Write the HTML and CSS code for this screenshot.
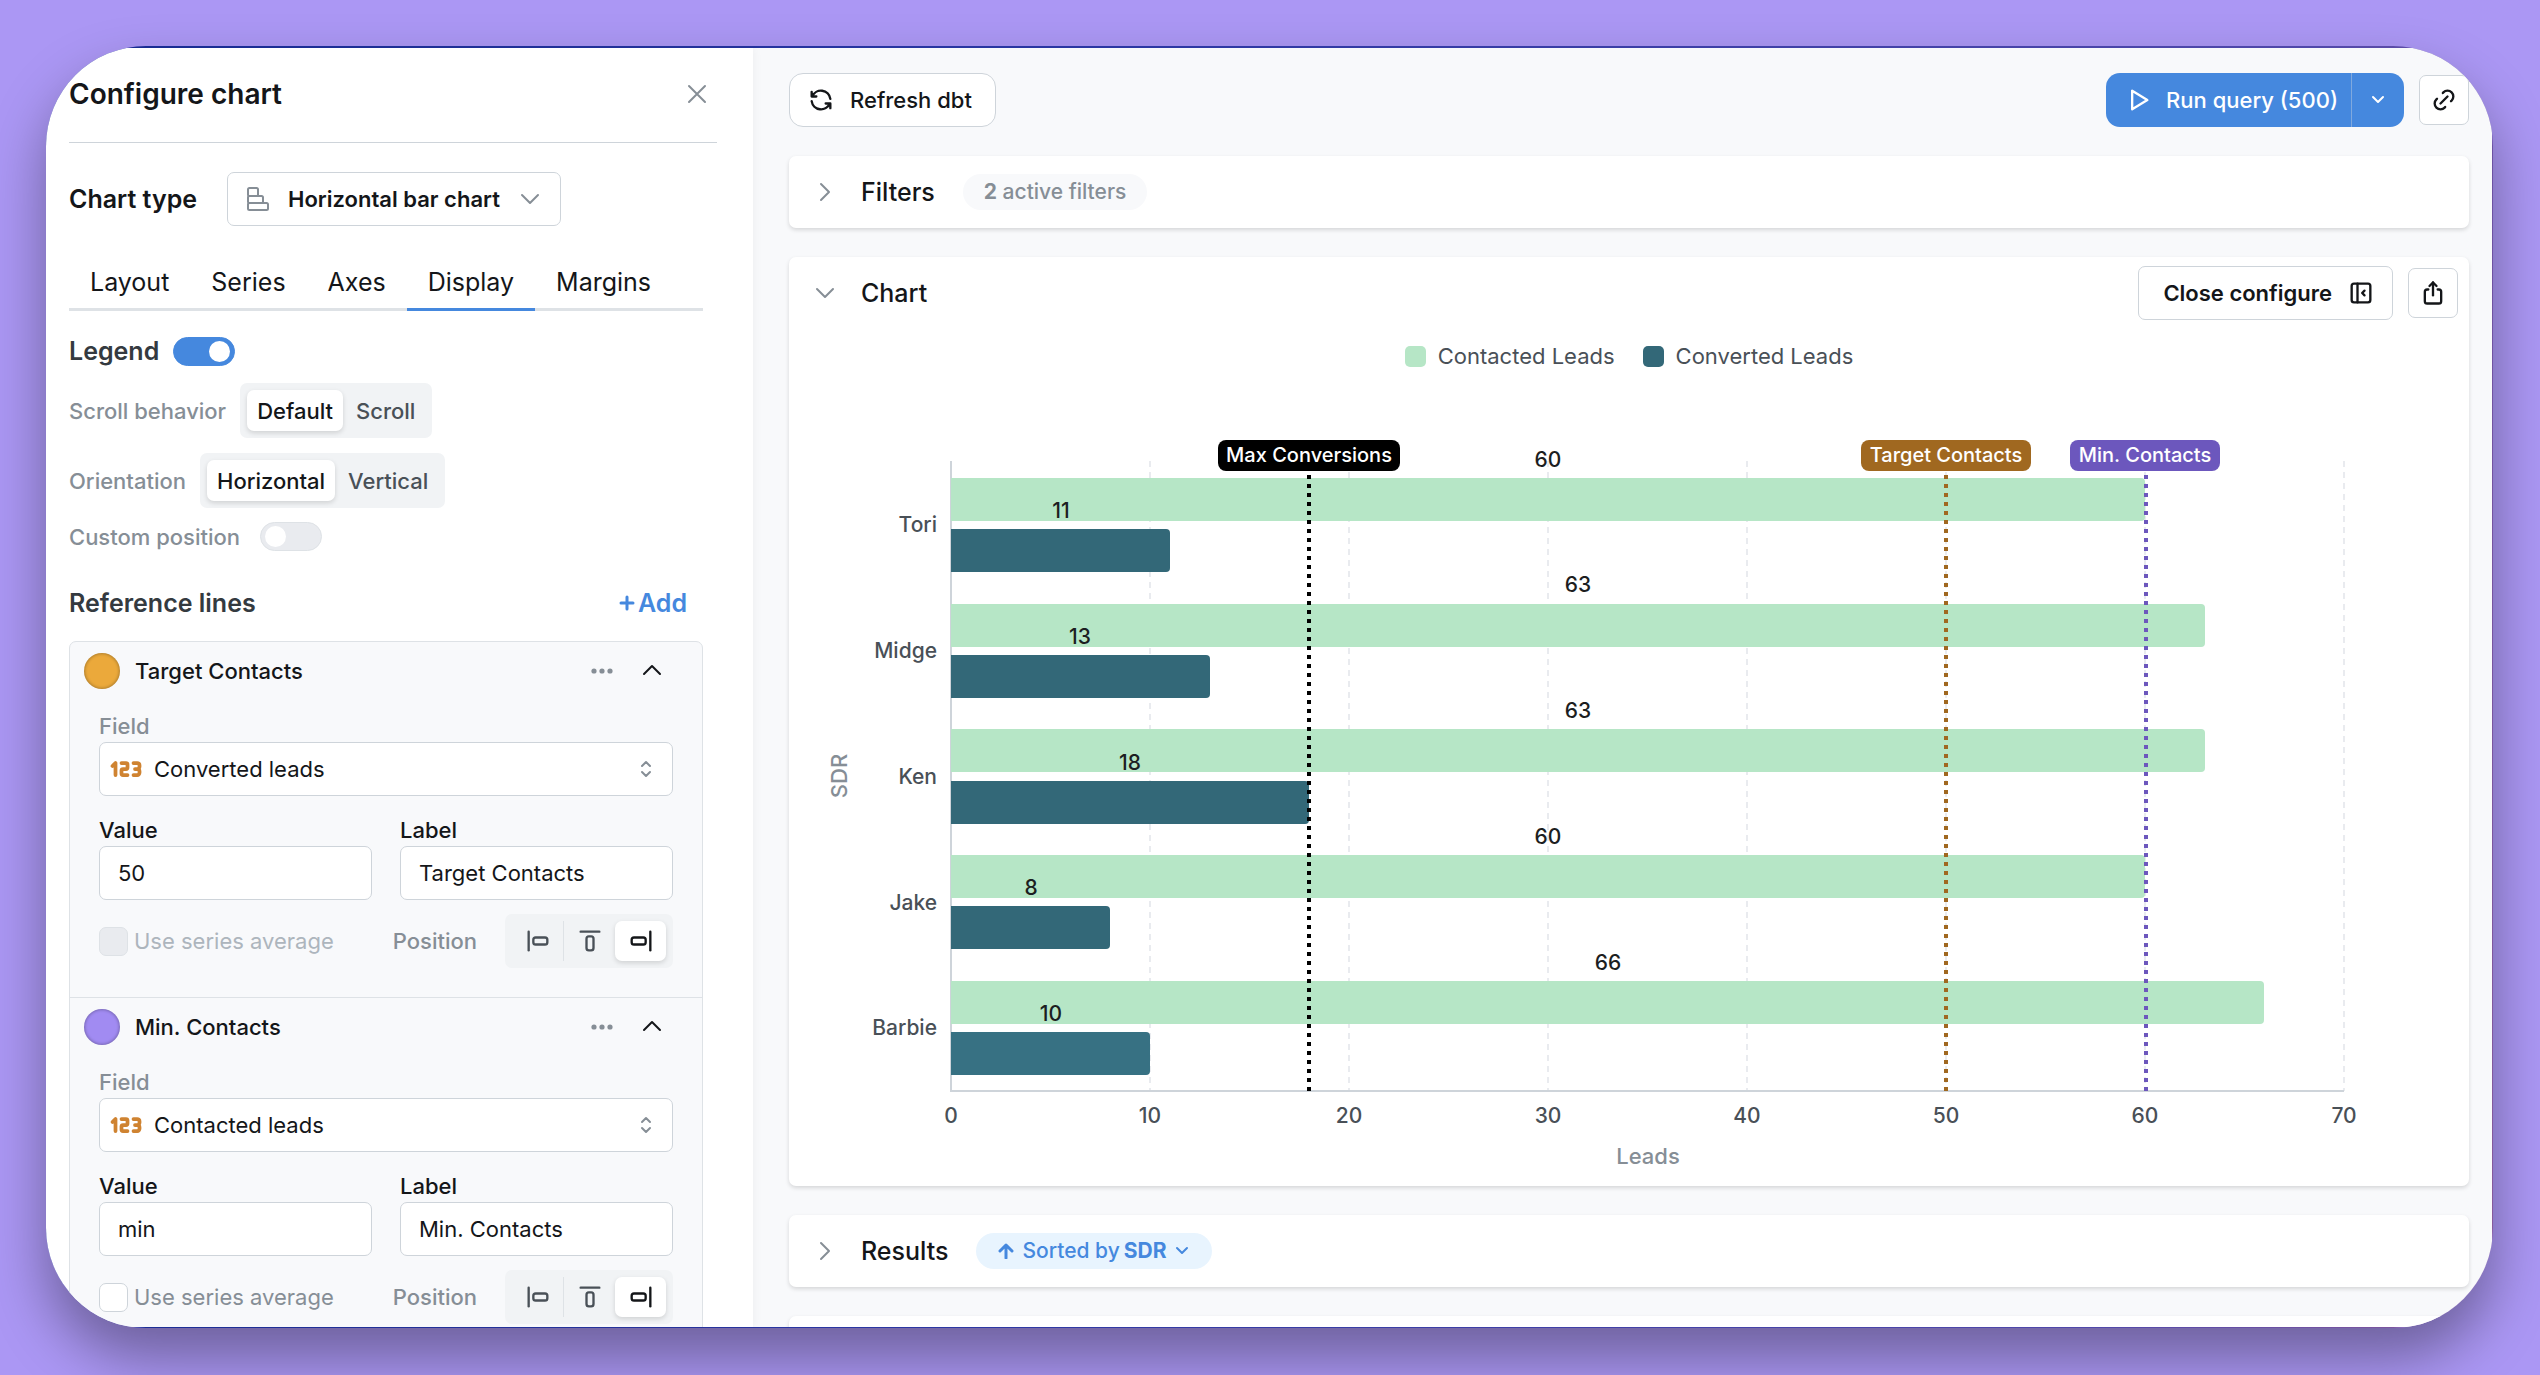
FILE: index.html
```html
<!DOCTYPE html>
<html lang="en">
<head>
<meta charset="utf-8">
<meta name="viewport" content="width=device-width, initial-scale=1">
<title>Configure chart</title>
<link rel="stylesheet" href="styles.css">
</head>
<body>
<svg class="sprite" aria-hidden="true">
  <symbol id="i-left" viewBox="0 0 24 24"><path d="M4 4v16"/><rect x="8" y="9" width="12" height="6" rx="2"/></symbol>
  <symbol id="i-top" viewBox="0 0 24 24"><path d="M4 4h16"/><rect x="9" y="8" width="6" height="12" rx="2"/></symbol>
  <symbol id="i-right" viewBox="0 0 24 24"><path d="M20 4v16"/><rect x="4" y="9" width="12" height="6" rx="2"/></symbol>
  <symbol id="i-123" viewBox="0 0 24 24"><path d="M3 10l2-2v8"/><path d="M9 8h3a1 1 0 0 1 1 1v2a1 1 0 0 1-1 1h-2a1 1 0 0 0-1 1v2a1 1 0 0 0 1 1h3"/><path d="M17 8h2.5a1.5 1.5 0 0 1 1.5 1.5v1a1.5 1.5 0 0 1-1.5 1.5h-1.5h1.5a1.5 1.5 0 0 1 1.5 1.5v1a1.5 1.5 0 0 1-1.5 1.5h-2.5"/></symbol>
  <symbol id="i-selector" viewBox="0 0 12 18"><path d="M2 6l4-4l4 4"/><path d="M2 12l4 4l4-4"/></symbol>
  <symbol id="i-dots" viewBox="0 0 24 24"><circle cx="4" cy="12" r="2.6"/><circle cx="12" cy="12" r="2.6"/><circle cx="20" cy="12" r="2.6"/></symbol>
  <symbol id="i-up" viewBox="0 0 24 24"><path d="M4 15l8-8l8 8"/></symbol>
  <symbol id="i-down" viewBox="0 0 24 24"><path d="M4 8l8 8l8-8"/></symbol>
  <symbol id="i-next" viewBox="0 0 24 24"><path d="M8 4l8 8l-8 8"/></symbol>
</svg>

<div class="window">
  <aside class="sidebar">
    <header class="sidebar-head">
      <h1 class="title">Configure chart</h1>
      <button class="plain close" type="button" aria-label="Close"><svg class="icon i20 muted" viewBox="0 0 20 20"><path d="M2 2l16 16M18 2l-16 16"/></svg></button>
    </header>

    <div class="chart-type">
      <span class="section-title dark" id="type-label">Chart type</span>
      <button class="type-button" type="button" aria-describedby="type-label">
        <svg class="icon type-icon muted" viewBox="0 0 24 26"><rect x="2" y="2" width="10" height="8" rx="1.5"/><rect x="2" y="10" width="15" height="7" rx="1.5"/><rect x="2" y="17" width="20" height="7" rx="1.5"/></svg>
        <span>Horizontal bar chart</span>
        <svg class="icon i24 muted"><use href="#i-down"/></svg>
      </button>
    </div>

    <nav class="tabs" role="tablist">
      <button class="tab" type="button" role="tab">Layout</button>
      <button class="tab" type="button" role="tab">Series</button>
      <button class="tab" type="button" role="tab">Axes</button>
      <button class="tab active" type="button" role="tab" aria-selected="true">Display</button>
      <button class="tab" type="button" role="tab">Margins</button>
    </nav>

    <div class="setting legend-setting">
      <label class="section-title" for="legend">Legend</label>
      <input class="switch" id="legend" type="checkbox" role="switch" checked>
    </div>
    <div class="setting scroll-setting" role="radiogroup" aria-labelledby="scroll-label">
      <span class="label" id="scroll-label">Scroll behavior</span>
      <div class="segmented">
        <label class="segment"><input type="radio" name="scroll" checked><span>Default</span></label>
        <label class="segment"><input type="radio" name="scroll"><span>Scroll</span></label>
      </div>
    </div>
    <div class="setting" role="radiogroup" aria-labelledby="orientation-label">
      <span class="label" id="orientation-label">Orientation</span>
      <div class="segmented">
        <label class="segment"><input type="radio" name="orientation" checked><span>Horizontal</span></label>
        <label class="segment"><input type="radio" name="orientation"><span>Vertical</span></label>
      </div>
    </div>
    <div class="setting wide-gap">
      <label class="label" for="custom">Custom position</label>
      <input class="switch" id="custom" type="checkbox" role="switch">
    </div>

    <div class="lines-head">
      <h2 class="section-title">Reference lines</h2>
      <button class="plain add" type="button"><svg class="icon i16 bold" viewBox="0 0 16 16"><path d="M8 2v12M2 8h12"/></svg>Add</button>
    </div>

    <div class="lines">
      <section class="line">
        <header class="line-head">
          <button class="swatch orange" type="button" aria-label="Line color"></button>
          <h3 class="line-name">Target Contacts</h3>
          <button class="plain" type="button" aria-label="More"><svg class="dots"><use href="#i-dots"/></svg></button>
          <button class="plain" type="button" aria-label="Collapse"><svg class="icon i24 dark"><use href="#i-up"/></svg></button>
        </header>
        <div class="line-body">
          <div class="field">
            <label class="label" for="field-1">Field</label>
            <div class="select">
              <svg class="icon number"><use href="#i-123"/></svg>
              <select id="field-1"><option>Converted leads</option><option>Contacted leads</option></select>
              <svg class="icon selector muted"><use href="#i-selector"/></svg>
            </div>
          </div>
          <div class="pair">
            <div class="field"><label class="label dark" for="value-1">Value</label><input class="text" id="value-1" value="50"></div>
            <div class="field"><label class="label dark" for="label-1">Label</label><input class="text" id="label-1" value="Target Contacts"></div>
          </div>
          <div class="line-foot">
            <label class="check disabled"><input type="checkbox" disabled><span>Use series average</span></label>
            <span class="label position" id="position-1">Position</span>
            <div class="segmented icons" role="radiogroup" aria-labelledby="position-1">
              <label class="segment"><input type="radio" name="pos1" aria-label="Start"><span><svg class="icon i28"><use href="#i-left"/></svg></span></label>
              <label class="segment split"><input type="radio" name="pos1" aria-label="Middle"><span><svg class="icon i28"><use href="#i-top"/></svg></span></label>
              <label class="segment"><input type="radio" name="pos1" aria-label="End" checked><span><svg class="icon i28"><use href="#i-right"/></svg></span></label>
            </div>
          </div>
        </div>
      </section>
      <section class="line">
        <header class="line-head">
          <button class="swatch purple" type="button" aria-label="Line color"></button>
          <h3 class="line-name">Min. Contacts</h3>
          <button class="plain" type="button" aria-label="More"><svg class="dots"><use href="#i-dots"/></svg></button>
          <button class="plain" type="button" aria-label="Collapse"><svg class="icon i24 dark"><use href="#i-up"/></svg></button>
        </header>
        <div class="line-body">
          <div class="field">
            <label class="label" for="field-2">Field</label>
            <div class="select">
              <svg class="icon number"><use href="#i-123"/></svg>
              <select id="field-2"><option>Contacted leads</option><option>Converted leads</option></select>
              <svg class="icon selector muted"><use href="#i-selector"/></svg>
            </div>
          </div>
          <div class="pair">
            <div class="field"><label class="label dark" for="value-2">Value</label><input class="text" id="value-2" value="min"></div>
            <div class="field"><label class="label dark" for="label-2">Label</label><input class="text" id="label-2" value="Min. Contacts"></div>
          </div>
          <div class="line-foot">
            <label class="check"><input type="checkbox"><span>Use series average</span></label>
            <span class="label position" id="position-2">Position</span>
            <div class="segmented icons" role="radiogroup" aria-labelledby="position-2">
              <label class="segment"><input type="radio" name="pos2" aria-label="Start"><span><svg class="icon i28"><use href="#i-left"/></svg></span></label>
              <label class="segment split"><input type="radio" name="pos2" aria-label="Middle"><span><svg class="icon i28"><use href="#i-top"/></svg></span></label>
              <label class="segment"><input type="radio" name="pos2" aria-label="End" checked><span><svg class="icon i28"><use href="#i-right"/></svg></span></label>
            </div>
          </div>
        </div>
      </section>
    </div>
  </aside>

  <main class="main">
    <div class="toolbar">
      <button class="button rounded refresh" type="button">
        <svg class="icon i28" viewBox="0 0 24 24"><path d="M20 11a8.1 8.1 0 0 0-15.5-2m-.5-4v4h4"/><path d="M4 13a8.1 8.1 0 0 0 15.5 2m.5 4v-4h-4"/></svg>
        Refresh dbt
      </button>
      <div class="run">
        <button class="run-main" type="button"><svg class="icon i28" viewBox="0 0 24 24"><path d="M7 4v16l13-8z"/></svg>Run query (500)</button>
        <button class="run-more" type="button" aria-label="Query limit"><svg class="icon i16" viewBox="0 0 16 16"><path d="M3 5l5 5l5-5"/></svg></button>
      </div>
      <button class="button square" type="button" aria-label="Copy link"><svg class="icon i28" viewBox="0 0 24 24"><path d="M9 15l6-6"/><path d="M11 6l.463-.536a5 5 0 0 1 7.071 7.072l-.534.464"/><path d="M13 18l-.397.534a5.068 5.068 0 0 1-7.127 0a4.972 4.972 0 0 1 0-7.071l.524-.463"/></svg></button>
    </div>

    <section class="card">
      <header class="card-head">
        <button class="plain" type="button" aria-label="Expand filters"><svg class="icon i24 muted"><use href="#i-next"/></svg></button>
        <h2 class="card-title">Filters</h2>
        <span class="pill"><b>2</b> active filters</span>
      </header>
    </section>

    <section class="card">
      <header class="card-head">
        <button class="plain" type="button" aria-label="Collapse chart"><svg class="icon i24 muted"><use href="#i-down"/></svg></button>
        <h2 class="card-title">Chart</h2>
        <div class="card-actions">
          <button class="button configure" type="button">Close configure
            <svg class="icon i28" viewBox="0 0 24 24"><rect x="4" y="4" width="16" height="16" rx="2"/><path d="M9 4v16"/><path d="M15 10l-2 2l2 2"/></svg>
          </button>
          <button class="button square" type="button" aria-label="Export"><svg class="icon i28" viewBox="0 0 24 24"><path d="M8 9h-1a2 2 0 0 0-2 2v8a2 2 0 0 0 2 2h10a2 2 0 0 0 2-2v-8a2 2 0 0 0-2-2h-1"/><path d="M12 14v-11"/><path d="M9 6l3-3l3 3"/></svg></button>
        </div>
      </header>
      <ul class="legend">
        <li><i class="key green"></i>Contacted Leads</li>
        <li><i class="key teal"></i>Converted Leads</li>
      </ul>
      <svg class="chart" viewBox="0 0 1680 803" role="img" aria-label="Contacted and converted leads by SDR">
        <path class="grid" d="M361 78V708M560 78V708M759 78V708M958 78V708M1157 78V708M1356 78V708M1555 78V708"/>
        <path class="axis" d="M162 78V709M161 708H1555"/>
        <g class="green-bar">
          <path d="M162 95h1190a4 4 0 0 1 4 4v35a4 4 0 0 1-4 4h-1190z"/>
          <path d="M162 221h1250a4 4 0 0 1 4 4v35a4 4 0 0 1-4 4h-1250z"/>
          <path d="M162 346h1250a4 4 0 0 1 4 4v35a4 4 0 0 1-4 4h-1250z"/>
          <path d="M162 472h1190a4 4 0 0 1 4 4v35a4 4 0 0 1-4 4h-1190z"/>
          <path d="M162 598h1309a4 4 0 0 1 4 4v35a4 4 0 0 1-4 4h-1309z"/>
        </g>
        <g class="teal-bar">
          <path d="M162 146h215a4 4 0 0 1 4 4v35a4 4 0 0 1-4 4h-215z"/>
          <path d="M162 272h255a4 4 0 0 1 4 4v35a4 4 0 0 1-4 4h-255z"/>
          <path d="M162 398h354a4 4 0 0 1 4 4v35a4 4 0 0 1-4 4h-354z"/>
          <path d="M162 523h155a4 4 0 0 1 4 4v35a4 4 0 0 1-4 4h-155z"/>
          <path class="hovered" d="M162 649h195a4 4 0 0 1 4 4v35a4 4 0 0 1-4 4h-195z"/>
        </g>
        <g class="value">
          <text x="759" y="84">60</text><text x="272" y="135">11</text>
          <text x="789" y="209">63</text><text x="291" y="261">13</text>
          <text x="789" y="335">63</text><text x="341" y="387">18</text>
          <text x="759" y="461">60</text><text x="242" y="512">8</text>
          <text x="819" y="587">66</text><text x="262" y="638">10</text>
        </g>
        <g class="category">
          <text x="148" y="149">Tori</text><text x="148" y="275">Midge</text><text x="148" y="401">Ken</text><text x="148" y="527">Jake</text><text x="148" y="652">Barbie</text>
        </g>
        <g class="tick">
          <text x="162" y="740">0</text><text x="361" y="740">10</text><text x="560" y="740">20</text><text x="759" y="740">30</text><text x="958" y="740">40</text><text x="1157" y="740">50</text><text x="1356" y="740">60</text><text x="1555" y="740">70</text>
        </g>
        <text class="axis-name" x="859" y="781">Leads</text>
        <text class="axis-name" transform="translate(58 393) rotate(-90)">SDR</text>
        <g class="marker black"><path d="M520 92V708"/><rect x="429" y="57" width="182" height="31" rx="8"/><text x="520" y="79">Max Conversions</text></g>
        <g class="marker brown"><path d="M1157 92V708"/><rect x="1072" y="57" width="170" height="31" rx="8"/><text x="1157" y="79">Target Contacts</text></g>
        <g class="marker violet"><path d="M1357 92V708"/><rect x="1281" y="57" width="150" height="31" rx="8"/><text x="1356" y="79">Min. Contacts</text></g>
      </svg>
    </section>

    <section class="card">
      <header class="card-head">
        <button class="plain" type="button" aria-label="Expand results"><svg class="icon i24 muted"><use href="#i-next"/></svg></button>
        <h2 class="card-title">Results</h2>
        <button class="pill sort" type="button">
          <svg class="icon i16 bold" viewBox="0 0 16 16"><path d="M8 15V2M2 8l6-6l6 6"/></svg>
          <span class="sort-text"><span>Sorted by</span><b>SDR</b></span>
          <svg class="icon i16" viewBox="0 0 16 16"><path d="M3 5l5 5l5-5"/></svg>
        </button>
      </header>
    </section>

    <section class="card"><header class="card-head"></header></section>
  </main>
</div>
</body>
</html>
```
FILE: styles.css
```css
* { box-sizing: border-box; }
body {
  margin: 0;
  padding: 46px 47px 47px 46px;
  height: 100vh;
  overflow: hidden;
  background: #ab97f4;
  color: #141619;
  font: 400 22px/26px Inter, sans-serif;
}
h1, h2, h3, ul { margin: 0; padding: 0; }
button, input, select { font: inherit; color: inherit; }
button { cursor: pointer; }
.sprite { display: none; }

.window {
  display: flex;
  height: 100%;
  padding: 2px 1px 1px 0;
  border-radius: 100px;
  overflow: hidden;
  background: linear-gradient(100deg, #182d95, #2b37a3 40%, #5048aa 85%, #8a5a9c);
  box-shadow: 0 30px 56px rgba(0, 0, 0, .36);
}

.icon {
  flex: none;
  fill: none;
  stroke: currentColor;
  stroke-width: 2;
  stroke-linecap: round;
  stroke-linejoin: round;
}
.i16 { width: 16px; height: 16px; }
.i20 { width: 20px; height: 20px; }
.i24 { width: 24px; height: 24px; }
.i28 { width: 28px; height: 28px; }
.bold { stroke-width: 3; }
.muted { color: #868e96; }
.dark { color: #141619; }
.plain { display: flex; align-items: center; padding: 0; border: 0; background: none; }

/* Sidebar */
.sidebar {
  position: relative;
  z-index: 1;
  flex: none;
  width: 707px;
  padding: 0 50px 0 23px;
  overflow: hidden;
  background: #fff;
  box-shadow: 0 0 10px rgba(0, 0, 0, .06);
}
.sidebar-head {
  display: flex;
  align-items: center;
  justify-content: space-between;
  height: 95px;
  margin-right: -14px;
  padding: 0 10px 3px 0;
  border-bottom: 1px solid #ced4da;
}
.title { font-size: 28px; font-weight: 600; line-height: 36px; }
.section-title { font-size: 25px; font-weight: 600; line-height: 30px; color: #343a40; }
.section-title.dark { color: #141619; }
.label { font-weight: 500; color: #868e96; }
.label.dark { color: #141619; }

.chart-type { display: flex; align-items: center; gap: 30px; margin-top: 29px; }
.type-button {
  display: flex;
  align-items: center;
  gap: 18px;
  height: 54px;
  padding: 0 18px;
  border: 1px solid #ced4da;
  border-radius: 7px;
  background: #fff;
  font-weight: 600;
}
.type-icon { width: 24px; height: 26px; }

.tabs { display: flex; margin-top: 28px; border-bottom: 3px solid #dee2e6; }
.tab {
  height: 57px;
  margin-bottom: -3px;
  padding: 2px 21px 0;
  border: 0;
  border-bottom: 3px solid transparent;
  background: none;
  font-size: 25px;
  font-weight: 400;
}
.tab.active { border-color: #4588de; }

.setting { display: flex; align-items: center; gap: 14px; margin-top: 14px; }
.setting.legend-setting { margin-top: 25px; }
.setting.scroll-setting { margin: 17px 0 15px; }
.setting.wide-gap { gap: 20px; }

.switch {
  appearance: none;
  display: flex;
  align-items: center;
  width: 62px;
  height: 29px;
  margin: 0;
  padding: 0 4px;
  border: 1px solid #dee2e6;
  border-radius: 15px;
  background: #e9ebef;
}
.switch::before { content: ""; width: 21px; height: 21px; border-radius: 50%; background: #fff; }
.switch:checked { justify-content: flex-end; border-color: #4588de; background: #4588de; }

.segmented { display: flex; gap: 3px; height: 55px; padding: 7px; border-radius: 7px; background: #f1f3f5; }
.segment { display: flex; }
.segment input { position: absolute; opacity: 0; }
.segment span {
  display: flex;
  flex: 1;
  align-items: center;
  justify-content: center;
  padding: 0 10px;
  border-radius: 7px;
  color: #495057;
  font-weight: 500;
}
.segment input:checked + span { background: #fff; color: #141619; box-shadow: 0 2px 5px rgba(0, 0, 0, .14); }
.segmented.icons { gap: 0; width: 168px; height: 54px; }
.icons .segment { flex: 1; }
.icons .segment span { padding: 0; }
.icons .split { border-left: 1px solid #dee2e6; }

.lines-head { display: flex; align-items: center; justify-content: space-between; height: 40px; margin: 32px 16px 18px 0; }
.add { gap: 3px; color: #4588de; font-size: 25px; font-weight: 600; }

.lines { border: 1px solid #dee2e6; border-radius: 7px; background: #f8f9fb; }
.line + .line { border-top: 1px solid #dee2e6; }
.line-head { display: flex; align-items: center; gap: 26px; height: 58px; padding: 0 38px 0 14px; }
.line-name { flex: 1; margin-left: -11px; font-size: 22px; font-weight: 500; }
.swatch { width: 36px; height: 36px; padding: 0; border: 0; border-radius: 50%; box-shadow: inset 0 0 3px 1px rgba(0, 0, 0, .25); }
.swatch.orange { background: #eba93b; }
.swatch.purple { background: #a18bf2; }
.dots { width: 24px; height: 24px; fill: #868e96; }
.line-body { padding: 13px 29px 29px; }
.field { display: flex; flex-direction: column; gap: 3px; min-width: 0; }
.text, .select select {
  width: 100%;
  height: 54px;
  padding: 0 18px;
  border: 1px solid #ced4da;
  border-radius: 7px;
  background: #fff;
}
.select { position: relative; }
.select select { appearance: none; padding-left: 54px; }
.select .number { position: absolute; left: 9px; top: 9px; width: 36px; height: 36px; color: #cf8331; stroke-width: 2.5; }
.select .selector { position: absolute; right: 21px; top: 18px; width: 12px; height: 18px; }
.pair { display: grid; grid-template-columns: 1fr 1fr; gap: 28px; margin-top: 21px; }
.line-foot { display: flex; align-items: center; margin-top: 14px; }
.check { display: flex; align-items: center; gap: 6px; color: #868e96; }
.check input {
  appearance: none;
  width: 29px;
  height: 29px;
  margin: 0;
  border: 1px solid #ced4da;
  border-radius: 7px;
  background: #fff;
}
.check.disabled { color: #adb5bd; }
.check.disabled input { border-color: #dee2e6; background: #e9ebef; }
.position { margin: 0 28px 0 auto; }

/* Main column */
.main {
  display: flex;
  flex: 1;
  flex-direction: column;
  gap: 29px;
  min-width: 0;
  padding: 25px 23px 0 36px;
  overflow: hidden;
  background: #f8f9fb;
}
.toolbar { display: flex; align-items: center; gap: 15px; }
.button {
  display: flex;
  align-items: center;
  justify-content: center;
  gap: 15px;
  height: 54px;
  padding: 0 23px 0 17px;
  border: 1px solid #ced4da;
  border-radius: 7px;
  background: #fff;
  font-weight: 500;
}
.button.rounded { border-radius: 14px; }
.button.refresh { margin-right: auto; }
.button.square { width: 50px; height: 50px; padding: 0; }
.button.configure { padding: 0 17px 0 24px; font-weight: 600; }
.run { display: flex; height: 54px; border-radius: 14px; overflow: hidden; background: #4588de; color: #fff; }
.run button { display: flex; align-items: center; border: 0; background: none; font-weight: 500; }
.run .run-main { gap: 14px; padding: 0 13px 0 18px; }
.run .run-more { justify-content: center; width: 53px; padding: 0; border-left: 1px solid #7fa9de; }

.card { flex: none; border-radius: 7px; background: #fff; box-shadow: 0 2px 4px rgba(0, 0, 0, .14); }
.card-head { display: flex; align-items: center; height: 72px; padding: 0 11px 0 24px; }
.card-title { margin: 0 28px 0 24px; font-size: 25px; font-weight: 500; line-height: 30px; }
.card-actions { display: flex; align-items: center; gap: 15px; margin-left: auto; }
.pill {
  height: 36px;
  padding: 0 21px;
  border: 0;
  border-radius: 18px;
  background: #f8f9fb;
  color: #868e96;
  font-size: 21px;
  font-weight: 500;
  line-height: 36px;
}
.pill b { font-weight: 700; }
.pill.sort { display: flex; align-items: center; gap: 8px; padding: 0 22px; background: #e8f4fe; color: #4588de; }
.sort-text { display: flex; gap: 4px; }

/* Chart */
.legend {
  display: flex;
  align-items: center;
  justify-content: center;
  gap: 28px;
  height: 54px;
  color: #495057;
  list-style: none;
}
.legend li { display: flex; align-items: center; gap: 12px; }
.key { width: 21px; height: 21px; border-radius: 5px; }
.key.green { background: #b6e6c6; }
.key.teal { background: #336878; }
.chart { display: block; width: 100%; }
.chart text { text-anchor: middle; font-size: 21px; }
.grid { fill: none; stroke: #e9ebef; stroke-width: 2; stroke-dasharray: 6 5; }
.axis { fill: none; stroke: #ced4da; stroke-width: 2; }
.green-bar { fill: #b6e6c6; }
.teal-bar { fill: #336878; }
.teal-bar .hovered { fill: #377183; }
.value { fill: #1c1e21; font-weight: 500; }
.category, .tick { fill: #495057; font-weight: 500; }
.chart .category text { text-anchor: end; }
.chart .axis-name { fill: #868e96; font-size: 22px; font-weight: 500; }
.marker path { fill: none; stroke-width: 4; stroke-dasharray: 4 5; }
.chart .marker text { fill: #fff; font-size: 20px; font-weight: 500; }
.black { fill: #000; stroke: #000; }
.brown { fill: #a06820; stroke: #a06820; }
.violet { fill: #6c57bd; stroke: #6c57bd; }
.marker rect, .chart .marker text { stroke: none; }
```
